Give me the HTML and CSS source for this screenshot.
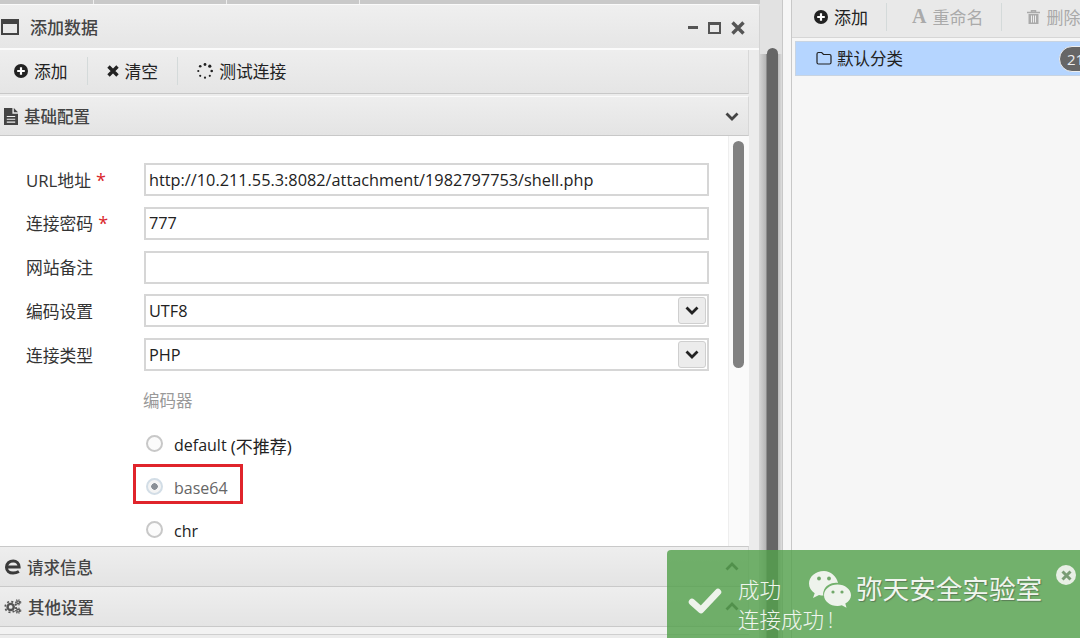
FILE: index.html
```html
<!DOCTYPE html>
<html lang="zh">
<head>
<meta charset="utf-8">
<title>添加数据</title>
<link rel="stylesheet" href="styles.css">
</head>
<body>
<div class="desktop">
  <main class="left">
    <div class="tabs"><span class="tab t1"></span><span class="tab t2"></span><span class="tab t3"></span><span class="tab t4"></span></div>
    <section class="window">
      <header class="title">
        <svg class="ico-win" viewBox="0 0 18 16"><path d="M1 1h16v14H1z" fill="none" stroke="#444" stroke-width="2"/><path d="M1 1h16v4H1z" fill="#444"/></svg>
        <span class="title-text">添加数据</span>
        <span class="win-ctrl">
          <svg width="10" height="4" viewBox="0 0 10 4"><path d="M0 0h10v3H0z" fill="#555"/></svg>
          <svg width="13" height="12" viewBox="0 0 13 12"><path d="M1 1h11v10H1z" fill="none" stroke="#555" stroke-width="2"/><path d="M1 1h11v2H1z" fill="#555"/></svg>
          <svg width="14" height="14" viewBox="0 0 14 14"><path d="M1.500 1.500l11 11M12.500 1.500l-11 11" stroke="#555" stroke-width="3.400" fill="none"/></svg>
        </span>
      </header>
      <div class="toolbar">
        <span class="tool"><svg width="14" height="14" viewBox="0 0 14 14"><circle cx="7" cy="7" r="7" fill="#222"/><path d="M7 3.200v7.600M3.200 7h7.600" stroke="#fff" stroke-width="2.200"/></svg>添加</span>
        <i class="sep"></i>
        <span class="tool"><svg width="12" height="12" viewBox="0 0 12 12"><path d="M1.500 1.500l9 9M10.500 1.500l-9 9" stroke="#222" stroke-width="3.400"/></svg>清空</span>
        <i class="sep"></i>
        <span class="tool"><svg width="16" height="16" viewBox="0 0 16 16" fill="#222"><circle cx="8" cy="1.500" r="1.400"/><circle cx="12.800" cy="3.200" r="1.600"/><circle cx="14.700" cy="8" r="1.300"/><circle cx="12.800" cy="12.800" r="1.100"/><circle cx="8" cy="14.700" r="1.100"/><circle cx="3.200" cy="12.800" r="1.100"/><circle cx="1.300" cy="8" r="1.100"/><circle cx="3.200" cy="3.200" r="1.300"/></svg>测试连接</span>
      </div>
      <div class="acc acc-open">
        <svg width="14" height="17" viewBox="0 0 15 18"><path d="M0 0h9v6h6v12H0z" fill="#444"/><path d="M10.500 0l4.500 4.500h-4.500z" fill="#444"/><path d="M3 9h9M3 12h9M3 15h9" stroke="#eee" stroke-width="1.200"/></svg>
        <span class="acc-text wide">基础配置</span>
        <svg class="chev" width="14" height="9" viewBox="0 0 14 9"><path d="M1.500 1.500L7 7l5.500-5.500" fill="none" stroke="#444" stroke-width="2.800"/></svg>
      </div>
      <div class="body">
        <form class="form">
          <label class="lbl">URL地址<b>*</b></label><div class="field">http://10.211.55.3:8082/attachment/1982797753/shell.php</div>
          <label class="lbl">连接密码<b>*</b></label><div class="field">777</div>
          <label class="lbl">网站备注</label><div class="field"></div>
          <label class="lbl">编码设置</label><div class="field select">UTF8<span class="drop"><svg width="14" height="9" viewBox="0 0 14 9"><path d="M1.500 1.500L7 7l5.500-5.500" fill="none" stroke="#222" stroke-width="2.800"/></svg></span></div>
          <label class="lbl">连接类型</label><div class="field select">PHP<span class="drop"><svg width="14" height="9" viewBox="0 0 14 9"><path d="M1.500 1.500L7 7l5.500-5.500" fill="none" stroke="#222" stroke-width="2.800"/></svg></span></div>
        </form>
        <div class="legend">编码器</div>
        <div class="radios">
          <div class="radio"><i class="dot"></i>default&nbsp;<span class="cjk">(不推荐)</span></div>
          <div class="radio on"><i class="dot"></i>base64<span class="mark"></span></div>
          <div class="radio"><i class="dot"></i>chr</div>
        </div>
        <div class="vbar"><i></i></div>
      </div>
      <div class="acc">
        <svg width="17" height="16" viewBox="0 0 18 17"><path d="M3.500 8.500H16C16 4.500 13 2 9.800 2 5.800 2 2.600 4.800 2.600 8.800c0 3.800 3 6.200 7 6.200 2.400 0 4.300-.6 6.200-1.700" fill="none" stroke="#3a3a3a" stroke-width="3.200"/></svg>
        <span class="acc-text wide">请求信息</span>
        <svg class="chev" width="14" height="9" viewBox="0 0 14 9"><path d="M1.500 7.500L7 2l5.500 5.500" fill="none" stroke="#444" stroke-width="2.800"/></svg>
      </div>
      <div class="acc">
        <svg width="18" height="15" viewBox="0 0 19 16"><g fill="none" stroke="#555"><circle cx="7" cy="8.500" r="3.300" stroke-width="2.600"/><circle cx="7" cy="8.500" r="5.800" stroke-width="1.800" stroke-dasharray="2.200 2.350"/><circle cx="15" cy="3.500" r="1.500" stroke-width="1.500"/><circle cx="15" cy="3.500" r="2.800" stroke-width="1.100" stroke-dasharray="1.300 1.340"/><circle cx="15" cy="12.500" r="1.500" stroke-width="1.500"/><circle cx="15" cy="12.500" r="2.800" stroke-width="1.100" stroke-dasharray="1.300 1.340"/></g></svg>
        <span class="acc-text wide">其他设置</span>
        <svg class="chev" width="14" height="9" viewBox="0 0 14 9"><path d="M1.500 7.500L7 2l5.500 5.500" fill="none" stroke="#444" stroke-width="2.800"/></svg>
      </div>
      <div class="acc-end"></div>
    </section>
  </main>
  <div class="gutter"><i></i></div>
  <aside class="right">
    <div class="rbar">
      <span class="tool"><svg width="14" height="14" viewBox="0 0 14 14"><circle cx="7" cy="7" r="7" fill="#222"/><path d="M7 3.200v7.600M3.200 7h7.600" stroke="#fff" stroke-width="2.200"/></svg>添加</span>
      <i class="sep"></i>
      <span class="tool off"><span class="big-a">A</span>重命名</span>
      <i class="sep"></i>
      <span class="tool off"><svg width="13" height="14" viewBox="0 0 13 14"><path d="M0 2.500h13M4.500 2.500V.8h4v1.700" fill="none" stroke="#aaa" stroke-width="1.500"/><path d="M1.500 4h10v10h-10z" fill="#aaa"/><path d="M4.500 5.500v7M6.500 5.500v7M8.500 5.500v7" stroke="#eee"/></svg>删除</span>
    </div>
    <div class="item">
      <svg width="16" height="14" viewBox="0 0 16 14"><path d="M1 3a1.500 1.500 0 0 1 1.500-1.500h3.200L7.500 3.500h6A1.500 1.500 0 0 1 15 5v6.500a1.500 1.500 0 0 1-1.500 1.500h-11A1.500 1.500 0 0 1 1 11.500z" fill="none" stroke="#222" stroke-width="1.200"/></svg>
      <span>默认分类</span>
      <em class="badge">21</em>
    </div>
  </aside>
</div>
<div class="toast">
  <svg class="check" width="34" height="28" viewBox="0 0 34 28"><path d="M4 15l9 8L30 5" fill="none" stroke="#eef3ec" stroke-width="6.500" stroke-linecap="round" stroke-linejoin="round"/></svg>
  <div class="msg"><div>成功</div><div>连接成功<span class="bang">!</span></div></div>
  <span class="close"><svg width="11" height="11" viewBox="0 0 11 11"><path d="M1.500 1.500l8 8M9.500 1.500l-8 8" stroke="#7a9c75" stroke-width="3"/></svg></span>
</div>
<div class="wm">
  <svg width="44" height="38" viewBox="0 0 44 38"><path d="M16 1C7.500 1 1 6.600 1 13.500c0 4 2.200 7.400 5.700 9.700L5 28l6-3c1.500.4 3 .6 4.500.6C15 24.500 15 23 15.500 21.500 17.500 15 24 12.200 30 13 28.500 6 22.500 1 16 1z" fill="#eef3ec"/><path d="M29.500 14.500c-7.500 0-13.500 4.800-13.500 10.700S22 36 29.500 36c1.500 0 3-.3 4.300-.7l4.700 2.500-1.200-4.200C40.700 31.500 43 28.500 43 25.200c0-5.900-6-10.700-13.500-10.700z" fill="#eef3ec"/><circle cx="11" cy="8.500" r="1.900" fill="#71a86a"/><circle cx="21" cy="8.500" r="1.900" fill="#71a86a"/><circle cx="25" cy="22" r="1.600" fill="#71a86a"/><circle cx="34" cy="22" r="1.600" fill="#71a86a"/></svg>
  <span>弥天安全实验室</span>
</div>
</body>
</html>
```
FILE: styles.css
```css
* { box-sizing: border-box; }
html, body { margin: 0; height: 100%; overflow: hidden; }
body {
  position: relative;
  width: 1080px;
  height: 638px;
  background: #f6f6f6;
  font-family: "Open Sans", "Noto Sans CJK SC", sans-serif;
  font-size: 16px;
  color: #222;
}
.desktop { display: flex; height: 638px; }
.left { width: 760px; flex: none; background: #e2e2e2; }
.tabs { display: flex; height: 4px; background: #c9c9c9; }
.tab { height: 4px; border-right: 1px solid #eee; }
.t1 { width: 94px; }
.t2 { width: 133px; }
.t3 { width: 133px; }
.t4 { flex: 1; border-right: 0; }
.window {
  height: 634px;
  background: #ececec;
  border-top: 1px solid #fafafa;
  border-right: 1px solid #d4d4d4;
  border-radius: 0 4px 0 0;
  padding-right: 10px;
}
.title {
  display: flex;
  align-items: center;
  height: 45px;
  margin-right: -10px;
  padding: 0 14px 0 1px;
  font-size: 17px;
  font-weight: 500;
  color: #444;
  background: linear-gradient(#efefef, #e6e6e6);
  border-bottom: 2px solid #fbfbfb;
}
.ico-win { width: 18px; height: 16px; flex: none; }
.title-text { margin-left: 11px; flex: 1; }
.win-ctrl { display: flex; align-items: center; gap: 10px; padding-top: 2px; }
.toolbar {
  display: flex;
  align-items: center;
  height: 44px;
  padding: 0 0 2px 14px;
  background: linear-gradient(#eeeeee, #e5e5e5);
  border-right: 1px solid #d8d8d8;
  border-bottom: 1px solid #c8c8c8;
  font-size: 16.800px;
}
.tool { display: inline-flex; align-items: center; gap: 6px; color: #222; white-space: nowrap; }
.sep { width: 1px; height: 28px; background: #d4dada; margin: 0 19px; flex: none; }
.acc {
  display: flex;
  align-items: center;
  height: 40px;
  padding: 0 9px 0 4px;
  background: linear-gradient(#eeeeee, #e4e4e4);
  border-top: 1px solid #c9c9c9;
  border-right: 1px solid #d8d8d8;
  font-size: 16.500px;
  font-weight: 500;
  color: #444;
}
.acc-open { height: 40px; margin-top: 2px; border-top: 1px solid #fafafa; border-bottom: 1px solid #c8c8c8; }
.acc-text { margin-left: 6px; }
.wide { flex: 1; }
.chev { flex: none; }
.body {
  position: relative;
  height: 410px;
  overflow: hidden;
  background: #fff;
  padding-top: 27px;
}
.form {
  display: grid;
  grid-template-columns: 144px 565px;
  grid-auto-rows: 33px;
  row-gap: 10.750px;
  align-items: center;
}
.lbl { padding-left: 26px; font-size: 16.800px; color: #333; }
.lbl b { margin-left: 5px; font-weight: 400; font-size: 18px; color: #d9252a; }
.field {
  display: flex;
  align-items: center;
  height: 33px;
  padding: 0 3px;
  border: 2px solid #d6d6d6;
  background: #fff;
  font-size: 16.300px;
  color: #222;
}
.select { justify-content: space-between; padding-right: 1px; }
.drop {
  display: flex;
  align-items: center;
  justify-content: center;
  width: 28px;
  height: 27px;
  background: #ececec;
  border: 1px solid #cfcfcf;
  border-radius: 3px;
}
.legend { margin: 18px 0 0 143px; font-size: 16.500px; color: #999; line-height: 24px; }
.radios { display: flex; flex-direction: column; gap: 19px; margin: 20px 0 0 146px; }
.radio { position: relative; display: flex; align-items: center; height: 24px; font-size: 16px; color: #222; }
.cjk { font-size: 17px; }
.dot {
  width: 17px;
  height: 17px;
  margin: -3px 11px 0 0;
  border: 2px solid #c8c8c8;
  border-radius: 50%;
  background: #fbfbfb;
  flex: none;
}
.on { color: #666; }
.on .dot { border-color: #d2dde6; background: radial-gradient(circle, #8a8f96 0 3px, #f4f4f4 3.500px); }
.mark {
  position: absolute;
  left: -13px;
  top: -12px;
  width: 110px;
  height: 40px;
  border: 3px solid #e0242b;
}
.vbar {
  position: absolute;
  top: 0;
  right: 0;
  width: 21px;
  height: 100%;
  background: #fafafa;
  border-left: 1px solid #eee;
}
.vbar i {
  position: absolute;
  top: 5px;
  left: 4px;
  width: 11px;
  height: 227px;
  border-radius: 6px;
  background: #808080;
}
.acc-end { height: 9px; border-top: 1px solid #c9c9c9; border-bottom: 1px solid #cfcfcf; background: #f2f2f2; }
.gutter {
  position: relative;
  width: 23px;
  flex: none;
  background: #e2e2e2;
  border-right: 1px solid #c8c8c8;
}
.gutter::before {
  content: "";
  position: absolute;
  top: 54px;
  left: 0;
  right: 0;
  bottom: 0;
  background: linear-gradient(90deg, #d2d2d2 0, #b4b4b4 6px, #666 7px, #666 18px, #bcbcbc 18px, #dedede 22px);
}
.gutter i {
  position: absolute;
  top: 48px;
  left: 7px;
  bottom: 0;
  width: 11px;
  background: #666;
  border-radius: 6px 6px 0 0;
}
.right {
  flex: 1;
  display: flex;
  flex-direction: column;
  margin-left: 8px;
  background: #f6f6f6;
  border-left: 1px solid #c8c8c8;
  min-width: 0;
}
.rbar {
  display: flex;
  align-items: center;
  height: 38px;
  padding: 0 0 4px 22px;
  background: #e9e9e9;
  border-bottom: 1px solid #d6d6d6;
  font-size: 17px;
  white-space: nowrap;
  overflow: hidden;
}
.rbar .sep { margin: 0 25px 0 18px; }
.off { color: #aaa; }
.big-a { font-family: "Liberation Serif", serif; font-weight: 700; font-size: 20px; color: #aaa; }
.item {
  display: flex;
  align-items: center;
  gap: 5px;
  height: 35px;
  margin: 3px 0 0 3px;
  padding: 0 0 2px 20px;
  background: #b5d5ff;
  border: 1px solid #c8d4e2;
  border-right: 0;
  font-size: 16.500px;
  color: #222;
  overflow: hidden;
}
.item span { flex: 1; }
.badge {
  flex: none;
  width: 34px;
  height: 26px;
  margin: 2px -13px 0 0;
  padding-left: 7px;
  line-height: 24px;
  border: 1px solid #eee;
  border-radius: 13px;
  background: #666;
  color: #eee;
  font-style: normal;
  font-size: 15px;
}
.toast {
  position: absolute;
  left: 667px;
  top: 550px;
  width: 413px;
  height: 88px;
  background: rgba(84, 161, 77, 0.82);
  border-radius: 4px 0 0 0;
}
.check { position: absolute; left: 21px; top: 37px; }
.msg { position: absolute; left: 71px; top: 25px; font-size: 21.500px; line-height: 30px; font-weight: 300; color: #f0f5ee; }
.bang { margin-left: 4px; }
.close {
  position: absolute;
  left: 389px;
  top: 15px;
  width: 20px;
  height: 20px;
  display: flex;
  align-items: center;
  justify-content: center;
  border-radius: 50%;
  background: #e8efe5;
}
.wm {
  position: absolute;
  left: 808px;
  top: 569px;
  display: flex;
  align-items: center;
  gap: 4px;
  font-size: 26.600px;
  line-height: 40px;
  color: #f1f5ef;
  text-shadow: 1px 1px 1px rgba(60, 60, 60, 0.45);
}
.wm svg { flex: none; }
```
